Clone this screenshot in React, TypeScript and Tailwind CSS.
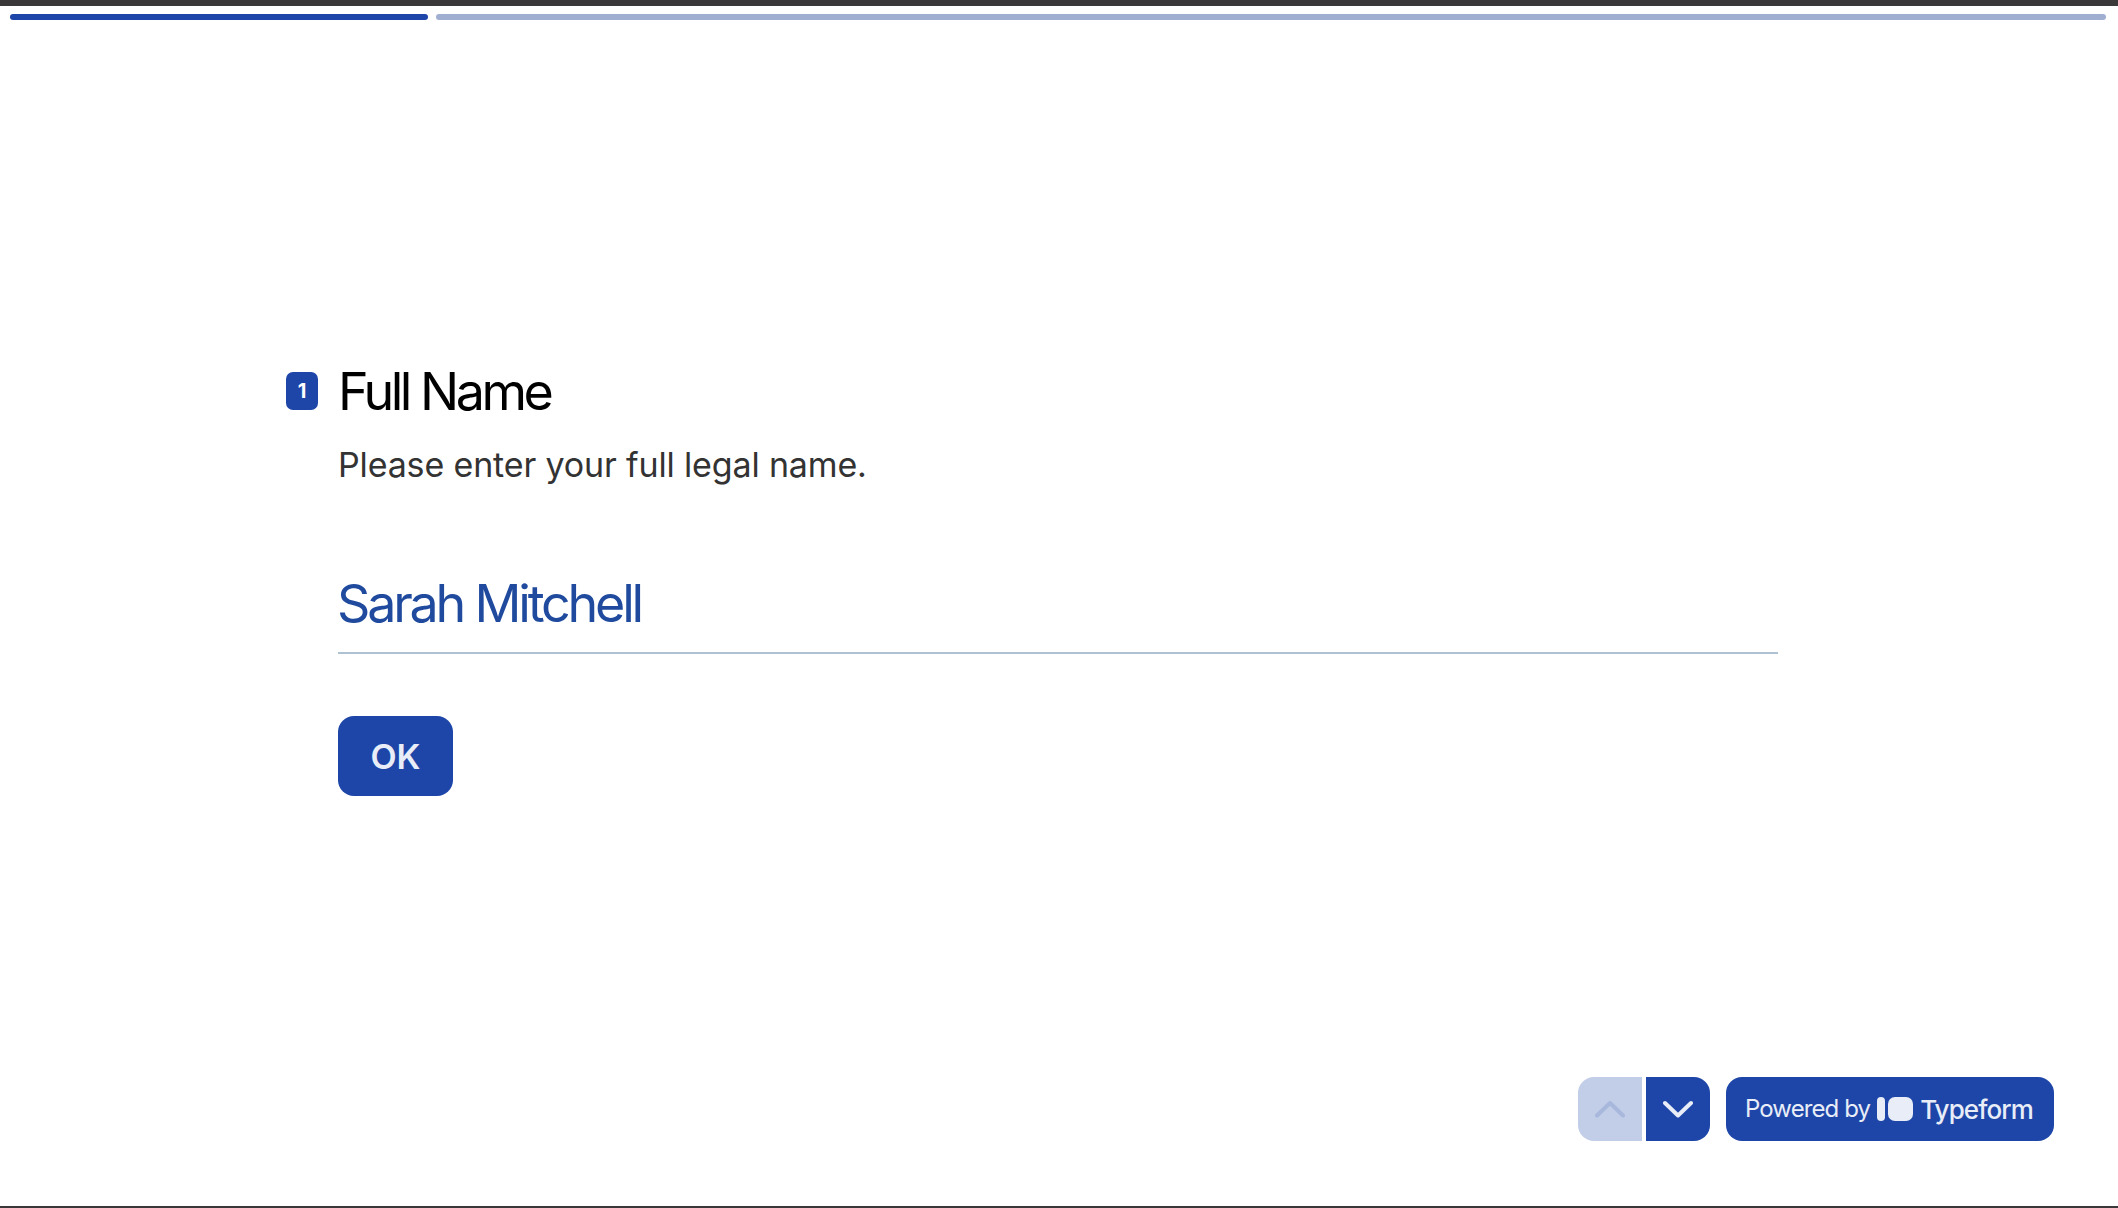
import React from "react";

export default function App() {
  return (
    <div className="flex h-[1208px] w-full flex-col overflow-hidden bg-white font-['Inter',sans-serif]">
      <div className="h-[6px] bg-[#3a3838]" />
      <div className="flex gap-2 pl-[10px] pr-[12px] pt-[8px]">
        <div className="h-[6px] w-[418px] rounded-full bg-[#1e46a8]" />
        <div className="h-[6px] flex-1 rounded-full bg-[#a0aed2]" />
      </div>
      <main className="flex flex-1 items-start pl-[286px] pt-[346px]">
        <div className="flex w-[26px] shrink-0 pt-[6px]">
          <div className="flex h-[38px] w-[32px] shrink-0 items-center justify-center rounded-[7px] bg-[#1e46a8] text-[20px] font-bold text-white">
            1
          </div>
        </div>
        <div className="ml-[26px] flex w-[1440px] flex-col">
          <h1 className="text-[52px] leading-[52px] font-normal tracking-[-3.5px] text-black">Full Name</h1>
          <p className="mt-[25px] text-[34px] leading-[44px] tracking-[-0.15px] text-[#333333]">Please enter your full legal name.</p>
          <div className="mt-[84px] border-b-2 border-[#aec2d4] pb-[15px] text-[52px] leading-[66px] tracking-[-3.2px] text-[#1f4a9e]">
            <span className="-ml-[1px]">Sarah Mitchell</span>
          </div>
          <button className="mt-[62px] flex h-[80px] w-[115px] items-center justify-center rounded-[16px] bg-[#1e46a8] text-[34px] font-semibold text-[#e8edf7]">
            OK
          </button>
        </div>
      </main>
      <footer className="flex items-center justify-end pb-[65px] pr-[64px]">
        <button className="flex h-[64px] w-[64px] items-center justify-center rounded-l-[16px] bg-[#c2cde8]">
          <svg width="30" height="18" viewBox="0 0 30 18" fill="none">
            <path d="M2 15.5 15 3l13 12.5" stroke="#a8b7dc" strokeWidth="4" strokeLinecap="round" strokeLinejoin="round" />
          </svg>
        </button>
        <button className="ml-[4px] flex h-[64px] w-[64px] items-center justify-center rounded-r-[16px] bg-[#1e46a8]">
          <svg width="30" height="18" viewBox="0 0 30 18" fill="none">
            <path d="M2 3l13 12.5L28 3" stroke="#e8edf7" strokeWidth="4" strokeLinecap="round" strokeLinejoin="round" />
          </svg>
        </button>
        <div className="ml-[16px] flex h-[64px] w-[328px] items-center rounded-[16px] bg-[#1e46a8] pl-[19px] text-[#e8edf7]">
          <span className="text-[24px] tracking-[-0.9px]">Powered by</span>
          <svg className="ml-[7px]" width="36" height="24" viewBox="0 0 36 24" fill="#e8edf7">
            <rect x="0" y="0" width="8" height="24" rx="4" />
            <rect x="11" y="0" width="25" height="24" rx="7" />
          </svg>
          <span className="ml-[7px] text-[26px] font-medium tracking-[-0.9px]">Typeform</span>
        </div>
      </footer>
      <div className="h-[2px] bg-[#3a3838]" />
    </div>
  );
}
